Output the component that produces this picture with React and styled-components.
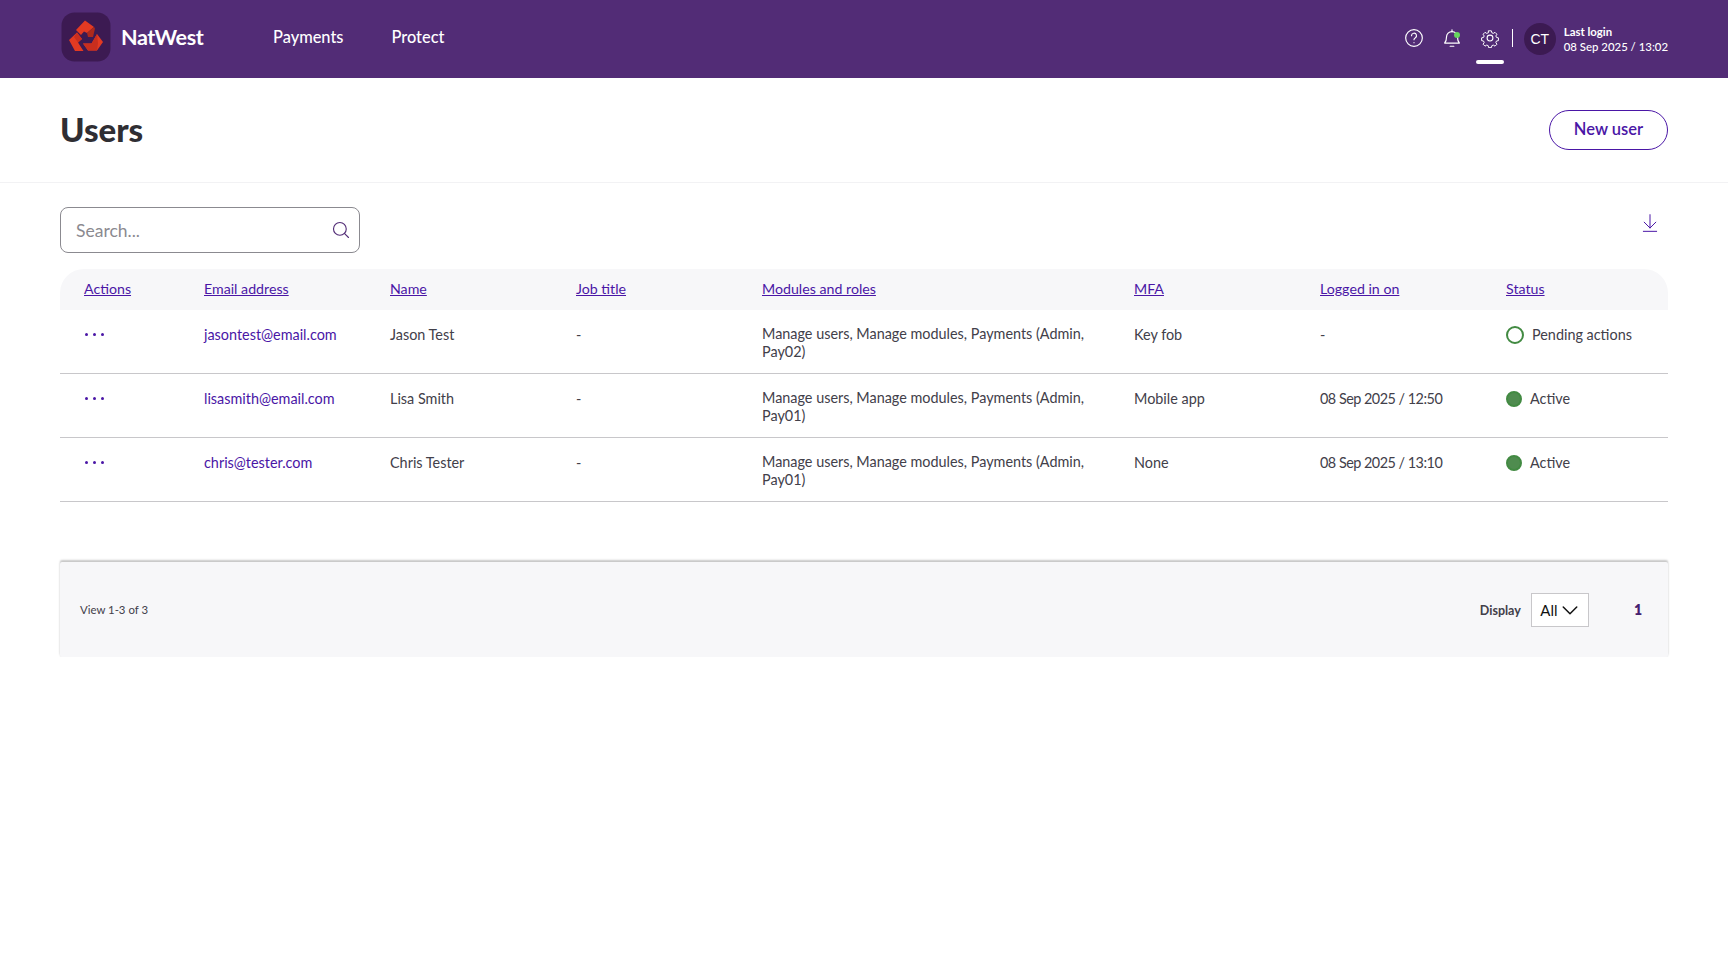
import React from "react";
import styled, { createGlobalStyle } from "styled-components";

const Global = createGlobalStyle`
  html, body { margin: 0; padding: 0; background: #fff; }
  body { font-family: Lato, "Noto Sans", sans-serif; color: #42404a; }
  * { box-sizing: border-box; }
`;

const TopBar = styled.header`
  height: 78px;
  background: #522c76;
  display: flex;
  align-items: center;
  padding: 0 60px 0 61px;
  color: #fff;
`;
const Brand = styled.div`
  display: flex;
  align-items: center;
  gap: 10px;
  width: 212px;
  padding-bottom: 4px;
`;
const LogoWord = styled.span`
  font-size: 21.6px;
  font-weight: 700;
  letter-spacing: -0.4px;
  margin-top: -1px;
`;
const MainNav = styled.nav`
  display: flex;
  gap: 48px;
  padding-bottom: 6px;
`;
const NavLink = styled.a`
  font-size: 16.4px;
  font-weight: 500;
  color: #fff;
`;
const Tools = styled.div`
  margin-left: auto;
  display: flex;
  align-items: center;
`;
const ToolBtn = styled.div`
  position: relative;
  width: 38px;
  height: 78px;
  padding-bottom: 3px;
  display: flex;
  align-items: center;
  justify-content: center;
  &::after {
    content: "";
    display: ${(p) => (p.$active ? "block" : "none")};
    position: absolute;
    left: 5px;
    right: 5px;
    bottom: 14px;
    height: 4px;
    border-radius: 2px;
    background: #fff;
  }
`;
const Dot = styled.span`
  position: absolute;
  top: 32px;
  left: 21px;
  width: 6px;
  height: 6px;
  border-radius: 50%;
  background: #67d45f;
`;
const Sep = styled.span`
  width: 1px;
  height: 18px;
  background: #fff;
  margin: 0 11px 2px 3px;
`;
const Avatar = styled.div`
  width: 32px;
  height: 32px;
  border-radius: 50%;
  background: #3c1a52;
  display: flex;
  align-items: center;
  justify-content: center;
  font-family: "Liberation Sans", sans-serif;
  font-size: 14px;
  margin-right: 8px;
`;
const LoginInfo = styled.div`
  font-size: 11.4px;
  line-height: 15px;
  font-weight: 500;
  white-space: nowrap;
  padding-bottom: 1px;
  b { font-weight: 700; display: block; }
`;

const TitleBar = styled.div`
  height: 105px;
  display: flex;
  align-items: center;
  justify-content: space-between;
  padding: 0 60px;
  border-bottom: 1px solid #f2f2f4;
`;
const Title = styled.h1`
  margin: 0 0 2px;
  font-size: 33px;
  font-weight: 900;
  color: #2f2e33;
`;
const OutlineBtn = styled.button`
  width: 119px;
  height: 40px;
  padding: 0 0 2px;
  border: 1px solid #4a16a6;
  border-radius: 20px;
  background: #fff;
  color: #4a16a6;
  font: 600 16.5px Lato, sans-serif;
`;

const Content = styled.main`
  padding: 24px 60px 0;
`;
const ToolRow = styled.div`
  display: flex;
  justify-content: space-between;
  align-items: flex-start;
  height: 62px;
`;
const SearchBox = styled.div`
  width: 300px;
  height: 46px;
  border: 1px solid #8b8a90;
  border-radius: 8px;
  display: flex;
  align-items: center;
  justify-content: space-between;
  padding: 0 9px 0 15px;
  font-size: 17.5px;
  color: #8b8a90;
`;
const SearchIcon = styled.span`
  display: flex;
  color: #522c76;
`;
const DownloadWrap = styled.div`
  margin: 6px 8px 0 0;
  color: #4a16a6;
`;

const columns = "144px 186px 186px 186px 372px 186px 186px 162px";
const HeadRow = styled.div`
  display: grid;
  grid-template-columns: ${columns};
  height: 41px;
  padding-bottom: 3px;
  align-items: center;
  background: #f7f7f9;
  border-radius: 24px 24px 0 0;
`;
const HeadLink = styled.a`
  font-size: 14.2px;
  color: #4a16a6;
  text-decoration: underline;
  padding-left: ${(p) => (p.$first ? "24px" : "0")};
`;
const Row = styled.div`
  display: grid;
  grid-template-columns: ${columns};
  height: 64px;
  border-bottom: 1px solid #c8c7ca;
  padding-top: 16px;
  font-size: 14.4px;
  line-height: 18px;
`;
const Cell = styled.div`
  padding-right: ${(p) => (p.$wide ? "24px" : "0")};
  margin-top: ${(p) => (p.$wide ? "-1px" : "0")};
  letter-spacing: ${(p) => (p.$tight ? "-0.5px" : "normal")};
`;
const Dots = styled.div`
  padding: 7px 0 0 25px;
  display: flex;
  gap: 5px;
  span {
    width: 3px;
    height: 3px;
    border-radius: 50%;
    background: #4a16a6;
  }
`;
const EmailLink = styled.a`
  color: #4a16a6;
`;
const Status = styled.div`
  display: flex;
  align-items: flex-start;
  gap: 8px;
  white-space: nowrap;
`;
const StatusDot = styled.span`
  width: ${(p) => (p.$pending ? "18px" : "16px")};
  height: ${(p) => (p.$pending ? "18px" : "16px")};
  margin-top: ${(p) => (p.$pending ? "0" : "1px")};
  border-radius: 50%;
  flex: none;
  border: 2px solid #428a42;
  background: ${(p) => (p.$pending ? "transparent" : "#4f8c4f")};
`;

const Footer = styled.div`
  margin-top: 60px;
  height: 95px;
  background: #f7f7f9;
  border-radius: 2px;
  box-shadow: 0 -2px 2px #c8c8c8, 0 0 2px #e4e4e6;
  display: flex;
  align-items: center;
  justify-content: space-between;
  padding: 0 26px 0 20px;
  font-size: 11.4px;
`;
const PagerRight = styled.div`
  display: flex;
  align-items: center;
`;
const DisplayLabel = styled.span`
  font-size: 12.5px;
  font-weight: 700;
  margin: 2px 10px 0 0;
`;
const Select = styled.div`
  width: 58px;
  height: 34px;
  border: 1px solid #c8c7ca;
  background: #fff;
  display: flex;
  align-items: center;
  justify-content: center;
  gap: 4px;
  font-size: 15px;
  color: #111;
  margin-right: 45px;
`;
const PageNum = styled.span`
  font-size: 14px;
  font-weight: 800;
  color: #46206f;
`;

const Logo = () => (
  <svg width="50" height="50" viewBox="0 0 50 50">
    <rect x="0.5" y="0.5" width="49" height="49" rx="13" fill="#3c1a52" />
    <polygon points="15,18 24,8.500 33,15 26,21 23,19.500 20,23" fill="#e33a22" />
    <polygon points="26,21 33,15 34,16.500 32,25 27,25" fill="#ad2a1c" />
    <polygon points="8,28 16,20.500 21,27 17,30.500 22.500,39 14,39" fill="#e33a22" />
    <polygon points="16,20.500 21,27 17,30.500 13,25" fill="#c92e1e" />
    <polygon points="22,31.500 30.500,31.500 36,22 42,30 36,38.500 27,38.500" fill="#e33a22" />
    <polygon points="30.500,31.500 36,22 37,31 36,38.500 27,38.500 22,31.500" fill="#c92e1e" />
  </svg>
);

const Svg = ({ children, size = 19, sw = 1.4 }) => (
  <svg width={size} height={size} viewBox="0 0 24 24" fill="none" stroke="currentColor" strokeWidth={sw} strokeLinecap="round" strokeLinejoin="round">
    {children}
  </svg>
);

const rows = [
  ["jasontest@email.com", "Jason Test", "Pay02)", "Key fob", "-", "Pending actions", true],
  ["lisasmith@email.com", "Lisa Smith", "Pay01)", "Mobile app", "08 Sep 2025 / 12:50", "Active", false],
  ["chris@tester.com", "Chris Tester", "Pay01)", "None", "08 Sep 2025 / 13:10", "Active", false],
];
const heads = ["Email address", "Name", "Job title", "Modules and roles", "MFA", "Logged in on", "Status"];

export default function App() {
  return (
    <>
      <Global />
      <TopBar>
        <Brand>
          <Logo />
          <LogoWord>NatWest</LogoWord>
        </Brand>
        <MainNav>
          <NavLink>Payments</NavLink>
          <NavLink>Protect</NavLink>
        </MainNav>
        <Tools>
          <ToolBtn>
            <Svg size={20}>
              <circle cx="12" cy="12" r="10" />
              <path d="M9 9.200a3 3 0 1 1 4.400 2.700c-.9.500-1.400 1.100-1.400 2.100" />
              <path d="M12 17.500v.2" />
            </Svg>
          </ToolBtn>
          <ToolBtn>
            <Svg size={22} sw={1.3}>
              <path d="M4 17.500c1.600-1.600 2-3 2-6.500a6 6 0 0 1 12 0c0 3.500.4 4.900 2 6.500z" />
              <path d="M12 5V3M10 21h4" />
            </Svg>
            <Dot />
          </ToolBtn>
          <ToolBtn $active>
            <Svg size={20} sw={1.3}>
              <circle cx="12" cy="12" r="3.500" />
              <path d="M10.200 2.500h3.600l.6 2.600 1.900.8 2.300-1.400 2.500 2.500-1.400 2.300.8 1.900 2.600.6v3.600l-2.600.6-.8 1.900 1.400 2.300-2.500 2.500-2.300-1.400-1.900.8-.6 2.600h-3.600l-.6-2.600-1.900-.8-2.300 1.400-2.500-2.500 1.400-2.300-.8-1.900-2.600-.6v-3.600l2.600-.6.8-1.900-1.400-2.300 2.500-2.500 2.300 1.400 1.900-.8z" transform="translate(1.100 1.100) scale(.91)" />
            </Svg>
          </ToolBtn>
          <Sep />
          <Avatar>CT</Avatar>
          <LoginInfo>
            <b>Last login</b>
            08 Sep 2025 / 13:02
          </LoginInfo>
        </Tools>
      </TopBar>
      <TitleBar>
        <Title>Users</Title>
        <OutlineBtn>New user</OutlineBtn>
      </TitleBar>
      <Content>
        <ToolRow>
          <SearchBox>
            Search...
            <SearchIcon>
              <Svg size={18} sw={1.5}>
                <circle cx="10.500" cy="10.500" r="8.500" />
                <path d="M16.500 16.500l5.500 5.500" />
              </Svg>
            </SearchIcon>
          </SearchBox>
          <DownloadWrap>
            <Svg size={20} sw={1.2}>
              <path d="M12 2v16M5 11l7 7 7-7M4 22h16" />
            </Svg>
          </DownloadWrap>
        </ToolRow>
        <HeadRow>
          <HeadLink $first>Actions</HeadLink>
          {heads.map((h) => (
            <HeadLink key={h}>{h}</HeadLink>
          ))}
        </HeadRow>
        {rows.map((r) => (
          <Row key={r[0]}>
            <Dots>
              <span />
              <span />
              <span />
            </Dots>
            <Cell>
              <EmailLink>{r[0]}</EmailLink>
            </Cell>
            <Cell>{r[1]}</Cell>
            <Cell>-</Cell>
            <Cell $wide>
              Manage users, Manage modules, Payments (Admin, {r[2]}
            </Cell>
            <Cell>{r[3]}</Cell>
            <Cell $tight>{r[4]}</Cell>
            <Status>
              <StatusDot $pending={r[6]} />
              {r[5]}
            </Status>
          </Row>
        ))}
        <Footer>
          <span>View 1-3 of 3</span>
          <PagerRight>
            <DisplayLabel>Display</DisplayLabel>
            <Select>
              All
              <Svg size={18} sw={2}>
                <path d="M3 8l9 9 9-9" />
              </Svg>
            </Select>
            <PageNum>1</PageNum>
          </PagerRight>
        </Footer>
      </Content>
    </>
  );
}
